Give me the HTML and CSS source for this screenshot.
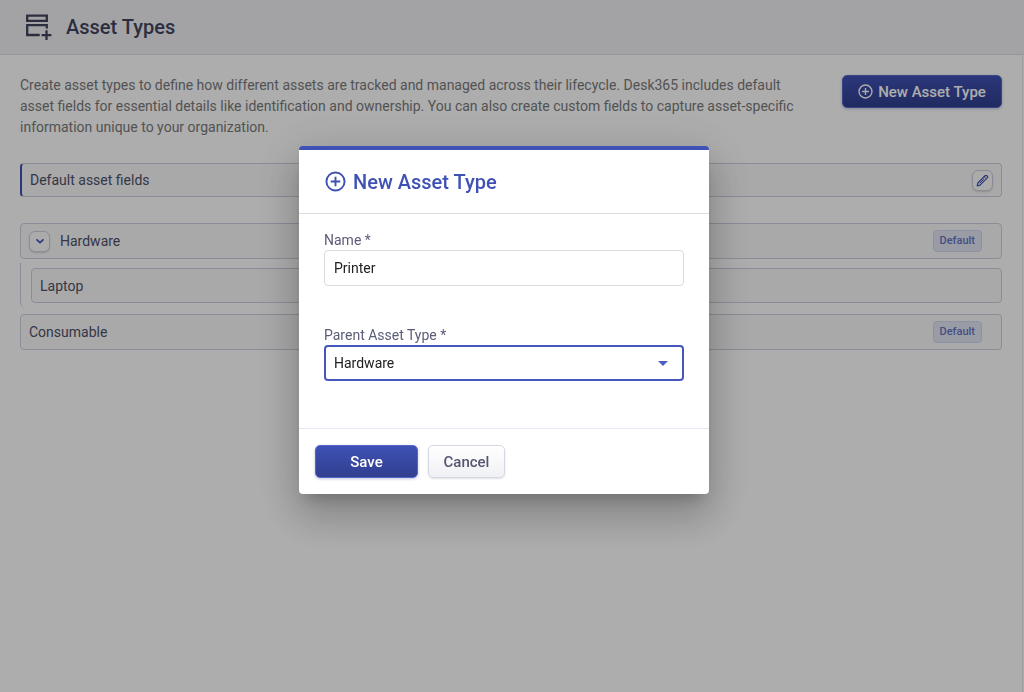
FILE: index.html
```html
<!DOCTYPE html>
<html lang="en">
<head>
    <meta charset="UTF-8">
    <meta name="viewport" content="width=device-width, initial-scale=1.0">
    <title>Asset Types</title>
    <link rel="stylesheet" href="styles.css">
</head>
<body>
    <header class="page-header">
        <svg class="page-icon" viewBox="0 0 27 27" fill="none" stroke="currentColor" stroke-width="2.3">
            <path d="M2.200 1.700h19.600v5.200H2.200z"/>
            <path d="M21.800 14.500v-3.300H2.200v9.800h12.500"/>
            <path d="M21.500 16.200v9.800M16.600 21.100h9.800"/>
        </svg>
        <h1>Asset Types</h1>
    </header>

    <main class="content">
        <div class="intro">
            <p>Create asset types to define how different assets are tracked and managed across their lifecycle. Desk365 includes default asset fields for essential details like identification and ownership. You can also create custom fields to capture asset-specific information unique to your organization.</p>
            <button type="button" class="btn btn-primary btn-new">
                <svg class="plus-icon" viewBox="0 0 22 22" fill="none" stroke="currentColor" stroke-width="2">
                    <circle cx="11" cy="11" r="9.500"/>
                    <path d="M11 6v10M6 11h10"/>
                </svg>
                New Asset Type
            </button>
        </div>

        <!-- Fields shared by every asset type -->
        <div class="row row-fields">
            <span class="row-name">Default asset fields</span>
            <button type="button" class="icon-btn" aria-label="Edit">
                <svg width="13" height="13" viewBox="0 0 14 14" fill="none" stroke="currentColor" stroke-width="1.300" stroke-linejoin="round">
                    <path d="M1.300 12.700l.7-3 7.800-7.800c.6-.6 1.300-.6 1.800-.1l.6.600c.5.500.5 1.200-.1 1.800L4.300 12z"/>
                    <path d="M9 3l2 2M4 10l4.500-4.500" stroke-width="1"/>
                </svg>
            </button>
        </div>

        <!-- Asset type tree -->
        <div class="tree">
            <div class="row">
                <button type="button" class="icon-btn" aria-label="Collapse">
                    <svg width="12" height="12" viewBox="0 0 12 12" fill="none" stroke="currentColor" stroke-width="1.600">
                        <path d="M2.500 4.300L6 7.600l3.500-3.300"/>
                    </svg>
                </button>
                <span class="row-name">Hardware</span>
                <span class="badge">Default</span>
            </div>
            <div class="children">
                <div class="row row-child">
                    <span class="row-name">Laptop</span>
                </div>
            </div>
            <div class="row">
                <span class="row-name">Consumable</span>
                <span class="badge">Default</span>
            </div>
        </div>
    </main>

    <!-- New asset type dialog -->
    <div class="overlay">
        <form class="modal" role="dialog" aria-labelledby="modal-title">
            <div class="modal-header">
                <svg class="plus-icon" viewBox="0 0 22 22" fill="none" stroke="currentColor" stroke-width="2">
                    <circle cx="11" cy="11" r="9.500"/>
                    <path d="M11 6v10M6 11h10"/>
                </svg>
                <h2 id="modal-title">New Asset Type</h2>
            </div>
            <div class="modal-body">
                <div class="form-group">
                    <label for="name">Name *</label>
                    <input type="text" id="name" name="name" value="Printer" required>
                </div>
                <div class="form-group">
                    <label for="parent">Parent Asset Type *</label>
                    <div class="select-wrap">
                        <select id="parent" name="parent" required>
                            <option selected>Hardware</option>
                            <option>Consumable</option>
                        </select>
                    </div>
                </div>
            </div>
            <div class="modal-footer">
                <button type="submit" class="btn btn-primary btn-save">Save</button>
                <button type="button" class="btn btn-cancel">Cancel</button>
            </div>
        </form>
    </div>
</body>
</html>
```
FILE: styles.css
```css
* {
    box-sizing: border-box;
}

body {
    margin: 0;
    min-height: 100vh;
    display: flex;
    flex-direction: column;
    font-family: Roboto, sans-serif;
    font-size: 14px;
    color: #4f5168;
    background: #fff;
}

.page-header {
    display: flex;
    align-items: center;
    gap: 14px;
    height: 55px;
    padding: 0 25px;
    background: #f0f1f4;
    border-bottom: 1px solid #dcdce6;
    color: #42455e;
}

.page-icon {
    width: 27px;
    height: 27px;
}

h1,
h2 {
    margin: 0;
    font-size: 20px;
    font-weight: 500;
}

.content {
    flex: 1;
    margin-right: 1px;
    padding: 20px;
    border-right: 1px solid #ebebf0;
}

.intro {
    display: flex;
    align-items: flex-start;
    justify-content: space-between;
    margin-bottom: 25px;
}

.intro p {
    margin: 0;
    max-width: 790px;
    line-height: 21px;
    color: #7a7a7a;
}

.btn {
    height: 33px;
    border-radius: 5px;
    font-family: inherit;
    font-size: 15px;
    font-weight: 500;
    cursor: pointer;
}

.btn-primary {
    border: 1px solid #5566c8;
    color: #fff;
    background: linear-gradient(#3f51b5, #303f8f);
    box-shadow: 0 1px 3px rgba(48, 63, 143, 0.3);
}

.btn-new {
    display: flex;
    flex-shrink: 0;
    align-items: center;
    justify-content: center;
    gap: 5px;
    width: 160px;
    padding: 0;
}

.btn-new .plus-icon {
    width: 15px;
    height: 15px;
}

.row {
    display: flex;
    align-items: center;
    gap: 10px;
    height: 36px;
    padding: 0 8px;
    border: 1px solid #cfcfe0;
    border-radius: 4px;
    background: #f9f9fa;
}

.row-name {
    flex: 1;
}

.row-fields {
    height: 34px;
    margin-bottom: 26px;
    border-left: 2px solid #3f51b5;
}

.icon-btn {
    display: flex;
    align-items: center;
    justify-content: center;
    width: 21px;
    height: 21px;
    padding: 0;
    border: 1px solid #cfcfdf;
    border-radius: 6px;
    color: #3f51b5;
    background: #fcfcfd;
    box-shadow: 0 1px 2px rgba(0, 0, 0, 0.15);
}

.badge {
    margin-right: 11px;
    padding: 4px 6px;
    border: 1px solid #d2d6ee;
    border-radius: 4px;
    font-size: 11px;
    line-height: 12px;
    font-weight: 500;
    color: #6573c4;
    background: #e4e6f4;
}

.children {
    margin: 4px 0 6px;
    padding: 5px 0 5px 10px;
    border-left: 1px solid #cfcfe0;
    border-bottom-left-radius: 6px;
}

.row-child {
    height: 35px;
}

.overlay {
    position: fixed;
    inset: 0;
    display: flex;
    align-items: flex-start;
    justify-content: center;
    padding: 146px 16px 0 0;
    background: rgba(0, 0, 0, 0.32);
}

.modal {
    width: 410px;
    border-top: 4px solid #3f51b5;
    border-radius: 4px;
    background: #fff;
    box-shadow: 0 11px 15px -7px rgba(0, 0, 0, 0.2),
                0 24px 38px 3px rgba(0, 0, 0, 0.14),
                0 9px 46px 8px rgba(0, 0, 0, 0.12);
}

.modal-header {
    display: flex;
    align-items: center;
    gap: 7px;
    height: 64px;
    padding: 0 26px;
    border-bottom: 1px solid #dcdcdc;
    color: #3f51b5;
}

.modal-header .plus-icon {
    width: 21px;
    height: 21px;
}

.modal-body {
    padding: 16px 25px 8px;
}

.form-group {
    margin-bottom: 39px;
}

label {
    display: block;
    line-height: 20px;
    color: #5b5c78;
}

.form-group input,
.form-group select {
    display: block;
    width: 100%;
    height: 36px;
    padding: 0 9px;
    border: 1px solid #dcdcdc;
    border-radius: 4px;
    outline: none;
    font-family: inherit;
    font-size: 14px;
    color: #212121;
    background: #fff;
}

.form-group select {
    appearance: none;
    padding: 0 8px;
    border: 2px solid #4557bd;
}

.select-wrap {
    position: relative;
}

/* dropdown arrow */
.select-wrap::after {
    content: "";
    position: absolute;
    top: 16px;
    right: 16px;
    border: 5px solid transparent;
    border-top-color: #4d5ec2;
    border-bottom: none;
    pointer-events: none;
}

.modal-footer {
    display: flex;
    gap: 10px;
    padding: 16px;
    border-top: 1px solid #e8e8f4;
}

.btn-save {
    width: 103px;
}

.btn-cancel {
    width: 77px;
    border: 1px solid #d5d7e3;
    color: #54566e;
    background: linear-gradient(#fff, #f0f1f5);
    box-shadow: 0 1px 2px rgba(0, 0, 0, 0.12);
}
```
